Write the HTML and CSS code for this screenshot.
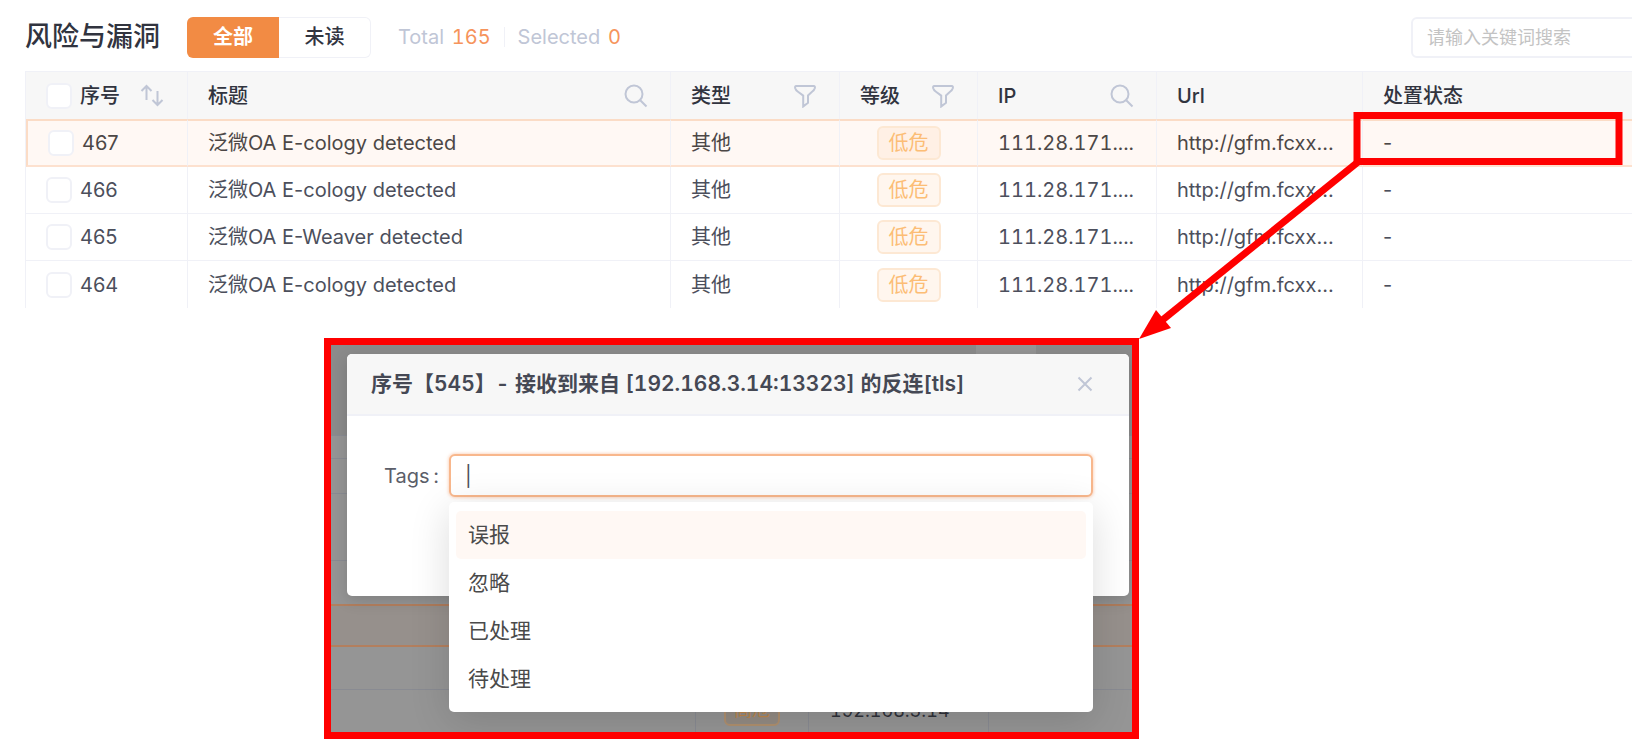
FILE: index.html
```html
<!DOCTYPE html>
<html lang="zh-CN">
<head>
<meta charset="utf-8">
<title>风险与漏洞</title>
<link rel="stylesheet" href="styles.css">
</head>
<body>
<svg class="sprite" aria-hidden="true">
  <symbol id="search" viewBox="0 0 24 24"><circle cx="10" cy="10" r="8.5"/><path d="M16.2 16.2 22.5 22.5"/></symbol>
  <symbol id="filter" viewBox="0 0 24 24"><path d="M3.200 2h17.600c1 0 1.300 1 1 2.200-.4 1.400-1.400 2.600-2.800 3.600L15 11.400v7.400L10.200 22.500V11.600L5 7.800C3.600 6.800 2.600 5.600 2.200 4.200 1.900 3 2.200 2 3.200 2z"/></symbol>
  <symbol id="sort" viewBox="0 0 24 24"><path d="M6.500 16V2M1.500 7l5-5 5 5M17.500 7v14M12.500 16l5 5 5-5"/></symbol>
  <symbol id="close" viewBox="0 0 16 16"><path d="M1.500 1.500l13 13M14.500 1.500l-13 13"/></symbol>
</svg>

<main class="page">
  <header class="toolbar">
    <h1 class="title">风险与漏洞</h1>
    <div class="segment">
      <button class="segment-item is-active" type="button">全部</button>
      <button class="segment-item" type="button">未读</button>
    </div>
    <div class="counts">
      <span class="count">Total <b>165</b></span>
      <span class="count">Selected <b>0</b></span>
    </div>
    <input class="search" type="text" placeholder="请输入关键词搜索" aria-label="搜索">
  </header>

  <table class="risks">
    <colgroup><col class="c-id"><col class="c-title"><col class="c-type"><col class="c-level"><col class="c-ip"><col class="c-url"><col></colgroup>
    <thead>
      <tr>
        <th><div class="cell id"><input type="checkbox" aria-label="全选"><span>序号</span><svg class="icon sort"><use href="#sort"/></svg></div></th>
        <th><div class="cell">标题<svg class="icon"><use href="#search"/></svg></div></th>
        <th><div class="cell">类型<svg class="icon"><use href="#filter"/></svg></div></th>
        <th><div class="cell">等级<svg class="icon"><use href="#filter"/></svg></div></th>
        <th><div class="cell">IP<svg class="icon"><use href="#search"/></svg></div></th>
        <th><div class="cell">Url</div></th>
        <th><div class="cell">处置状态</div></th>
      </tr>
    </thead>
    <tbody>
      <tr class="is-selected"><td><label class="cell id"><input type="checkbox">467</label></td><td>泛微OA E-cology detected</td><td>其他</td><td class="level"><span class="tag">低危</span></td><td class="num">111.28.171....</td><td>http://gfm.fcxx...</td><td>-</td></tr>
      <tr><td><label class="cell id"><input type="checkbox">466</label></td><td>泛微OA E-cology detected</td><td>其他</td><td class="level"><span class="tag">低危</span></td><td class="num">111.28.171....</td><td>http://gfm.fcxx...</td><td>-</td></tr>
      <tr><td><label class="cell id"><input type="checkbox">465</label></td><td>泛微OA E-Weaver detected</td><td>其他</td><td class="level"><span class="tag">低危</span></td><td class="num">111.28.171....</td><td>http://gfm.fcxx...</td><td>-</td></tr>
      <tr><td><label class="cell id"><input type="checkbox">464</label></td><td>泛微OA E-cology detected</td><td>其他</td><td class="level"><span class="tag">低危</span></td><td class="num">111.28.171....</td><td>http://gfm.fcxx...</td><td>-</td></tr>
    </tbody>
  </table>

  <section class="shot">
    <div class="backdrop" aria-hidden="true">
      <div class="band band-head"><i></i></div>
      <div class="band band-a"></div>
      <div class="band band-b"></div>
      <div class="band band-c"></div>
      <div class="band band-d"></div>
      <div class="band band-warm"></div>
      <div class="band band-e"></div>
      <div class="band band-last">
        <span></span><span><em class="mini-tag">高危</em></span><span class="mini-ip">192.168.3.14</span><span></span>
      </div>
    </div>
    <div class="dialog" role="dialog" aria-labelledby="dialog-title">
      <div class="dialog-head">
        <h2 class="dialog-title" id="dialog-title">序号【545】- 接收到来自 [192.168.3.14:13323] 的反连[tls]</h2>
        <button class="close" type="button" aria-label="关闭"><svg><use href="#close"/></svg></button>
      </div>
      <div class="dialog-body">
        <label class="field-label" for="tags">Tags&thinsp;:</label>
        <div class="field">
          <input class="field-input" id="tags" type="text" value="|">
          <ul class="menu" role="listbox">
            <li class="menu-item is-hover" role="option">误报</li>
            <li class="menu-item" role="option">忽略</li>
            <li class="menu-item" role="option">已处理</li>
            <li class="menu-item" role="option">待处理</li>
          </ul>
        </div>
      </div>
    </div>
  </section>

  <svg class="callout" width="1632" height="753" viewBox="0 0 1632 753" aria-hidden="true">
    <rect x="1357" y="115.500" width="262" height="46"/>
    <path class="callout-line" d="M1358 162 1160 322"/>
    <path class="callout-tip" d="M1139 339 1156 310 1171 328z"/>
  </svg>
</main>
</body>
</html>
```
FILE: styles.css
```css
* { box-sizing: border-box; }

body {
  margin: 0;
  background: #fff;
  color: #4c4f5c;
  font: 20px/28px Inter, "Noto Sans CJK SC", sans-serif;
  overflow-x: hidden;
}

button, input { font: inherit; color: inherit; }
h1, h2, ul { margin: 0; padding: 0; }

.num, .count b, .dialog-title, .mini-ip { font-variant-numeric: tabular-nums; }

.sprite { display: none; }

.page { position: relative; padding: 16px 0 0 25px; }

.toolbar { display: flex; align-items: center; height: 42px; }

.title {
  font-size: 27px;
  font-weight: 500;
  line-height: 40px;
  color: #31343f;
}

.segment { display: flex; margin-left: 27px; height: 41px; }

.segment-item {
  width: 92px;
  padding: 0;
  border: 1px solid #f0f1f7;
  border-left: 0;
  border-radius: 0 6px 6px 0;
  background: #fff;
  color: #31343f;
  font-weight: 500;
}

.segment-item.is-active {
  border: 0;
  border-radius: 6px 0 0 6px;
  background: #f28b44;
  color: #fff;
  font-weight: 700;
}

.counts { display: flex; align-items: center; margin-left: 27px; color: #c0c6d6; }
.count { line-height: 20px; }
.count b { margin-left: 2px; color: #f6945c; font-weight: 400; }
.count + .count { margin-left: 13px; padding-left: 13px; border-left: 1px solid #f0f1f7; }

.search {
  width: 260px;
  height: 41px;
  margin-left: auto;
  margin-right: -39px;
  padding: 0 14px;
  border: 2px solid #f0f1f7;
  border-radius: 6px;
  font-size: 18px;
}

.search::placeholder { color: #c3c3c3; opacity: 1; }

.risks {
  width: 100%;
  margin-top: 13px;
  table-layout: fixed;
  border-collapse: separate;
  border-spacing: 0;
  border-left: 1px solid #f0f1f7;
}

.c-id { width: 162px; }
.c-title { width: 483px; }
.c-type { width: 169px; }
.c-level { width: 138px; }
.c-ip { width: 179px; }
.c-url { width: 206px; }

.risks th, .risks td {
  height: 47px;
  padding: 0 20px;
  border-right: 1px solid #f0f1f7;
  border-bottom: 1px solid #f0f1f7;
  text-align: left;
  font-weight: 400;
  white-space: nowrap;
}

.risks th {
  height: 48px;
  padding-right: 22px;
  border-top: 1px solid #f0f1f7;
  border-bottom: 0;
  background: #f7f7f7;
  color: #31343f;
  font-weight: 500;
}

.risks th:last-child, .risks td:last-child { border-right: 0; }
.risks tr:last-child td { border-bottom: 0; }

.risks .is-selected td {
  height: 48px;
  border-top: 2px solid #fbdcc6;
  border-bottom: 2px solid #fde1cf;
  background: #fff8f4;
  color: #4c4746;
}

.risks .is-selected td:first-child { border-left: 2px solid #fbdcc6; }

.cell { display: flex; align-items: center; justify-content: space-between; }
.cell.id { justify-content: flex-start; gap: 8px; }

.cell input {
  appearance: none;
  flex: none;
  width: 26px;
  height: 26px;
  margin: 0;
  border: 2px solid #f0f1f7;
  border-radius: 6px;
  background: #fff;
}

.icon { flex: none; width: 24px; height: 24px; fill: none; stroke: #c0c6d6; stroke-width: 2; }
.icon.sort { margin-left: 12px; }

.risks .level { text-align: center; }

.tag {
  display: inline-block;
  padding: 1px 10px;
  border: 2px solid #fde8d3;
  border-radius: 6px;
  background: #fff6ee;
  color: #fcbd75;
  vertical-align: middle;
}

.is-selected .tag { background: #fff0e5; }

.shot {
  position: relative;
  width: 815px;
  margin: 30px 0 0 299px;
  padding: 9px 3px 136px 16px;
  border: 7px solid #f00;
  overflow: hidden;
}

.backdrop {
  position: absolute;
  inset: 0;
  display: flex;
  flex-direction: column;
  background: #959595;
}

.band { flex: none; border-bottom: 1px solid #898b92; }
.band-head { height: 91px; background: #8b8b8b; }
.band-head i { display: block; width: 60px; height: 100%; margin-left: 645px; background: #959595; }
.band-a { height: 23px; }
.band-b { height: 35px; }
.band-c { height: 67px; }
.band-d { height: 45px; border-bottom: 2px solid #b37f5e; }
.band-warm { height: 41px; background: #96908c; border-bottom: 2px solid #b37f5e; }
.band-e { height: 43px; }
.band-last { display: grid; grid-template-columns: 365px 113px 180px 1fr; height: 43px; }
.band-last span { border-right: 1px solid #898b92; text-align: center; }
.band-last span:last-child { border: 0; }

.mini-tag {
  display: inline-block;
  width: 56px;
  height: 32px;
  margin-top: 4px;
  border: 2px solid #b0906f;
  border-radius: 6px;
  background: #948c84;
  color: #bd874c;
  font-size: 18px;
  font-style: normal;
  line-height: 28px;
}

.band-last .mini-ip {
  padding-left: 21px;
  color: #30323a;
  font-size: 18px;
  line-height: 42px;
  text-align: left;
}

.dialog {
  position: relative;
  min-height: 242px;
  border-radius: 5px;
  background: #fff;
  box-shadow: 0 4px 16px rgba(0, 0, 0, .15);
}

.dialog-head {
  display: flex;
  align-items: center;
  justify-content: space-between;
  height: 62px;
  padding: 0 36px 0 24px;
  border-bottom: 2px solid #f0f1f7;
  border-radius: 5px 5px 0 0;
  background: #f7f7f7;
}

.dialog-title { color: #454854; font-size: 21px; font-weight: 600; line-height: 28px; white-space: nowrap; }

.close { display: flex; padding: 0; border: 0; background: none; }
.close svg { width: 16px; height: 16px; fill: none; stroke: #c0c6d6; stroke-width: 2; }

.dialog-body { display: flex; align-items: flex-start; gap: 10px; padding: 38px 36px 0 37px; }
.field-label { line-height: 44px; color: #5b5e69; white-space: nowrap; }
.field { position: relative; flex: 1; }

.field-input {
  display: block;
  width: 100%;
  height: 43px;
  padding: 0 14px;
  border: 2px solid #f8b78c;
  border-radius: 6px;
  background: #fff;
  box-shadow: 0 0 3px 1px rgba(246, 148, 92, .35);
}

.menu {
  position: absolute;
  top: 48px;
  left: 0;
  right: 0;
  padding: 9px 7px;
  border-radius: 5px;
  background: #fff;
  box-shadow: 0 8px 40px rgba(0, 0, 0, .14);
  list-style: none;
}

.menu-item { padding: 0 12px; border-radius: 5px; color: #4a4a4a; font-size: 21px; line-height: 48px; }
.menu-item.is-hover { background: #fff8f4; }

.callout { position: absolute; top: 0; left: 0; pointer-events: none; fill: none; stroke: #f00; stroke-width: 7; }
.callout .callout-tip { fill: #f00; stroke: none; }
```
